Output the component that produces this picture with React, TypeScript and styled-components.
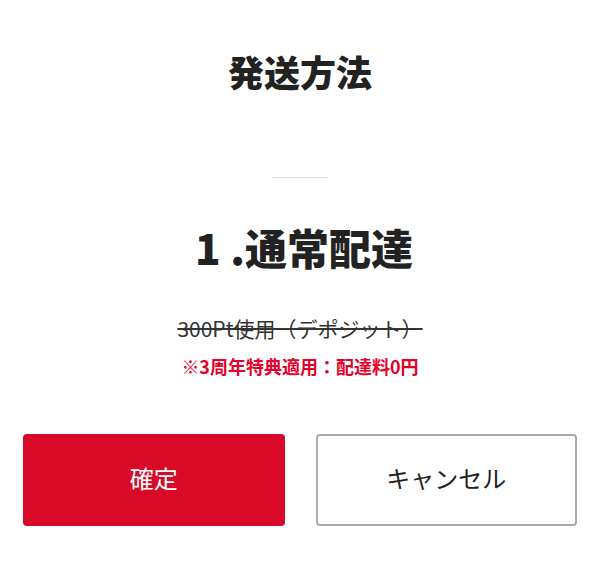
import React from 'react';
import styled, { createGlobalStyle } from 'styled-components';

const GlobalStyle = createGlobalStyle`
    html, body {
        margin: 0;
        padding: 0;
        background: #fff;
    }
    body {
        font-family: 'Noto Sans CJK JP', 'Noto Sans', sans-serif;
        color: #222;
    }
`;

const Modal = styled.div`
    display: flex;
    flex-direction: column;
    align-items: center;
    width: 600px;
    padding: 53px 23px 40px;
    box-sizing: border-box;
`;

const Title = styled.h2`
    margin: 0;
    font-size: 36px;
    line-height: 36px;
    font-weight: 900;
`;

const Divider = styled.hr`
    width: 56px;
    height: 1px;
    border: 0;
    background: #e3e3e6;
    margin: 88px 0 0;
`;

const MethodName = styled.h1`
    margin: 48px 0 0 8px;
    font-size: 42px;
    line-height: 42px;
    font-weight: 900;
`;

const OldPrice = styled.p`
    margin: 50px 0 0;
    font-size: 21px;
    line-height: 20px;
    color: #333;
    text-decoration: line-through;
    text-decoration-thickness: 2px;
`;

const Notice = styled.p`
    margin: 19px 0 0;
    font-size: 18px;
    line-height: 18px;
    font-weight: 700;
    color: #e4002b;
`;

const Buttons = styled.div`
    display: grid;
    grid-template-columns: 1fr 1fr;
    gap: 31px;
    width: 100%;
    margin-top: 59px;
`;

const Button = styled.button<{ $primary?: boolean }>`
    height: 92px;
    padding: 0 0 6px;
    border-radius: 4px;
    font-family: inherit;
    font-size: 24px;
    cursor: pointer;
    background: ${p => (p.$primary ? '#d80a27' : '#fff')};
    color: ${p => (p.$primary ? '#fff' : '#222')};
    border: ${p => (p.$primary ? '0' : '2px solid #aaa')};
`;

export default function App() {
    return (
        <>
            <GlobalStyle />
            <Modal>
                <Title>発送方法</Title>
                <Divider />
                <MethodName>1 .通常配達</MethodName>
                <OldPrice>300Pt使用（デポジット）</OldPrice>
                <Notice>※3周年特典適用：配達料0円</Notice>
                <Buttons>
                    <Button $primary>確定</Button>
                    <Button>キャンセル</Button>
                </Buttons>
            </Modal>
        </>
    );
}
